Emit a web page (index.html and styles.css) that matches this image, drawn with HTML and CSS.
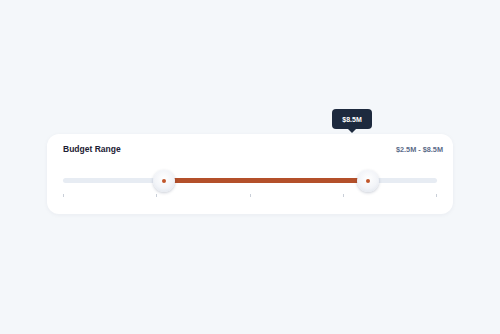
FILE: index.html
```html
<!DOCTYPE html>
<html>
<head>
<meta charset="utf-8">
<link rel="stylesheet" href="styles.css">
</head>
<body>
<div class="card">
  <div class="header">
    <span class="title">Budget Range</span>
    <span class="value">$2.5M - $8.5M</span>
  </div>
  <div class="slider">
    <div class="track"></div>
    <div class="fill" style="left:27%;width:54.6%"></div>
    <div class="handle" style="left:27%"><span class="dot"></span></div>
    <div class="handle" style="left:81.6%"><span class="dot"></span></div>
    <div class="tip" style="left:289px">$8.5M</div>
  </div>
  <div class="ticks">
    <span></span><span></span><span></span><span></span><span></span>
  </div>
</div>
</body>
</html>
```
FILE: styles.css
```css
html, body {
  margin: 0;
  padding: 0;
}
body {
  background: #f4f7fa;
  width: 500px;
  height: 334px;
  padding-top: 134px;
  box-sizing: border-box;
  font-family: "Liberation Sans", Arial, sans-serif;
}
.card {
  margin-left: 47px;
  width: 406px;
  height: 80px;
  box-sizing: border-box;
  background: #ffffff;
  border-radius: 12px;
  box-shadow: 0 1px 4px rgba(30, 45, 80, 0.05);
  padding: 8px 16px 0 16px;
}
.header {
  display: flex;
  justify-content: space-between;
  align-items: center;
  height: 14px;
  margin-right: -6px;
}
.title {
  font-size: 8.5px;
  font-weight: bold;
  color: #1c2033;
}
.value {
  font-size: 7.3px;
  font-weight: bold;
  color: #5b6b89;
}
.slider {
  position: relative;
  height: 20px;
  margin-top: 15px;
}
.track {
  position: absolute;
  left: 0;
  right: 0;
  top: 7px;
  height: 5px;
  border-radius: 3px;
  background: #e7ecf3;
}
.fill {
  position: absolute;
  top: 7px;
  height: 5px;
  background: #b4502a;
}
.handle {
  position: absolute;
  top: -1px;
  width: 22px;
  height: 22px;
  margin-left: -11px;
  border-radius: 50%;
  background: radial-gradient(circle at 50% 40%, #ffffff 0%, #f2f4f8 55%, #d9dfe8 100%);
  box-shadow: 0 1px 3px rgba(40, 55, 90, 0.25);
  display: flex;
  align-items: center;
  justify-content: center;
}
.dot {
  width: 4px;
  height: 4px;
  border-radius: 50%;
  background: #c0552a;
}
.tip {
  position: absolute;
  top: -62px;
  width: 40px;
  height: 20px;
  margin-left: -20px;
  border-radius: 4px;
  background: #1d2a3e;
  color: #ffffff;
  font-size: 7px;
  font-weight: bold;
  display: flex;
  align-items: center;
  justify-content: center;
}
.tip::after {
  content: "";
  position: absolute;
  left: 50%;
  bottom: -4px;
  margin-left: -4px;
  border-left: 4px solid transparent;
  border-right: 4px solid transparent;
  border-top: 4px solid #1d2a3e;
}
.ticks {
  display: flex;
  justify-content: space-between;
  margin-top: 3px;
}
.ticks span {
  width: 1px;
  height: 3px;
  background: #c9cfd8;
}
```
